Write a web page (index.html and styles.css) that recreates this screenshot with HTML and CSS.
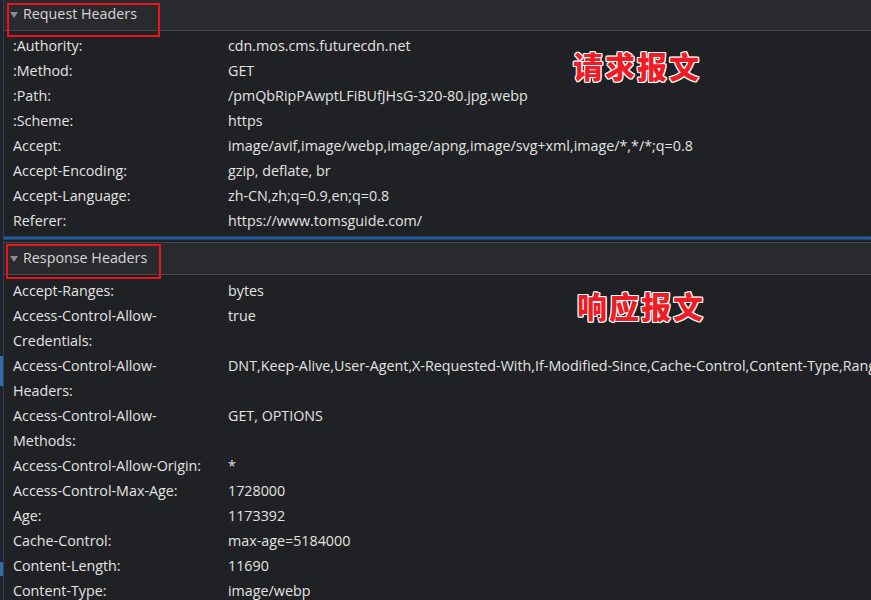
FILE: index.html
```html
<!DOCTYPE html>
<html>
<head>
<meta charset="utf-8">
<link rel="stylesheet" href="styles.css">
</head>
<body>
<div class="panel">
  <div class="strip">
    <span class="blip b1"></span>
    <span class="blip b2"></span>
  </div>
  <div class="content">
    <section class="sec first">
      <div class="sec-header"><span class="tri"></span>Request Headers</div>
      <div class="rows">
        <div class="row"><div class="k">:Authority:</div><div class="v">cdn.mos.cms.futurecdn.net</div></div>
        <div class="row"><div class="k">:Method:</div><div class="v">GET</div></div>
        <div class="row"><div class="k">:Path:</div><div class="v">/pmQbRipPAwptLFiBUfJHsG-320-80.jpg.webp</div></div>
        <div class="row"><div class="k">:Scheme:</div><div class="v">https</div></div>
        <div class="row"><div class="k">Accept:</div><div class="v">image/avif,image/webp,image/apng,image/svg+xml,image/*,*/*;q=0.8</div></div>
        <div class="row"><div class="k">Accept-Encoding:</div><div class="v">gzip, deflate, br</div></div>
        <div class="row"><div class="k">Accept-Language:</div><div class="v">zh-CN,zh;q=0.9,en;q=0.8</div></div>
        <div class="row"><div class="k">Referer:</div><div class="v">https://www.tomsguide.com/</div></div>
      </div>
      <div class="mark mark1"></div>
      <div class="note note1">请求报文</div>
    </section>
    <div class="glow"></div>
    <section class="sec second">
      <div class="sec-header"><span class="tri"></span>Response Headers</div>
      <div class="rows">
        <div class="row"><div class="k">Accept-Ranges:</div><div class="v">bytes</div></div>
        <div class="row"><div class="k">Access-Control-Allow-<br>Credentials:</div><div class="v">true</div></div>
        <div class="row"><div class="k">Access-Control-Allow-<br>Headers:</div><div class="v">DNT,Keep-Alive,User-Agent,X-Requested-With,If-Modified-Since,Cache-Control,Content-Type,Range</div></div>
        <div class="row"><div class="k">Access-Control-Allow-<br>Methods:</div><div class="v">GET, OPTIONS</div></div>
        <div class="row"><div class="k">Access-Control-Allow-Origin:</div><div class="v">*</div></div>
        <div class="row"><div class="k">Access-Control-Max-Age:</div><div class="v">1728000</div></div>
        <div class="row"><div class="k">Age:</div><div class="v">1173392</div></div>
        <div class="row"><div class="k">Cache-Control:</div><div class="v">max-age=5184000</div></div>
        <div class="row"><div class="k">Content-Length:</div><div class="v">11690</div></div>
        <div class="row"><div class="k">Content-Type:</div><div class="v">image/webp</div></div>
      </div>
      <div class="mark mark2"></div>
      <div class="note note2">响应报文</div>
    </section>
  </div>
</div>
</body>
</html>
```
FILE: styles.css
```css
html, body {
  margin: 0;
  padding: 0;
  background: #202124;
  overflow: hidden;
  height: 600px;
}
body {
  font-family: "Open Sans", "Noto Sans", sans-serif;
  font-size: 14.3px;
  color: #e3e3e3;
}
.panel {
  display: flex;
  width: 871px;
  height: 600px;
}
.strip {
  position: relative;
  width: 3px;
  flex: none;
  background: #1d2330;
  border-right: 1px solid #3a3d42;
}
.blip {
  position: absolute;
  left: 0;
  width: 3px;
  background: #2f6db0;
}
.b1 { top: 356px; height: 30px; }
.b2 { top: 562px; height: 14px; }
.content {
  flex: 1;
  min-width: 0;
  overflow: hidden;
}
.sec {
  position: relative;
}
.sec-header {
  display: flex;
  align-items: center;
  height: 31px;
  background: #292a2d;
  border-bottom: 1px solid #45474b;
  color: #d6d6d6;
  padding-left: 6px;
  padding-bottom: 3px;
  box-sizing: border-box;
}
.second .sec-header {
  height: 33px;
  border-top: 1px solid #45474b;
  padding-bottom: 2px;
}
.tri {
  width: 0;
  height: 0;
  border-left: 4px solid transparent;
  border-right: 4px solid transparent;
  border-top: 6px solid #8c8c8c;
  margin-right: 5px;
  margin-top: 2px;
}
.rows {
  padding-top: 2px;
}
.second .rows {
  padding-top: 3px;
}
.row {
  display: flex;
  line-height: 25px;
}
.k {
  width: 215px;
  flex: none;
  padding-left: 9px;
  box-sizing: content-box;
}
.v {
  white-space: nowrap;
}
.glow {
  height: 4px;
  margin-top: 3px;
  margin-bottom: 2px;
  background: linear-gradient(to bottom, #1b3a5e, #2a66a8, #1b3a5e);
}
.mark {
  position: absolute;
  border: 2px solid #e8141e;
  box-sizing: border-box;
}
.mark1 { left: 3px; top: 3px; width: 153px; height: 34px; }
.mark2 { left: 2px; top: 2px; width: 155px; height: 35px; }
.note {
  position: absolute;
  font-family: "Noto Sans CJK SC", sans-serif;
  font-weight: 900;
  font-size: 30px;
  line-height: 32px;
  color: #ee1c25;
  letter-spacing: 2px;
  text-shadow: 1px 0 0 #fff, -1px 0 0 #fff, 0 1px 0 #fff, 0 -1px 0 #fff,
    1px 1px 0 #fff, -1px -1px 0 #fff, 1px -1px 0 #fff, -1px 1px 0 #fff;
}
.note1 { left: 569px; top: 49px; }
.note2 { left: 573px; top: 47px; }
```
